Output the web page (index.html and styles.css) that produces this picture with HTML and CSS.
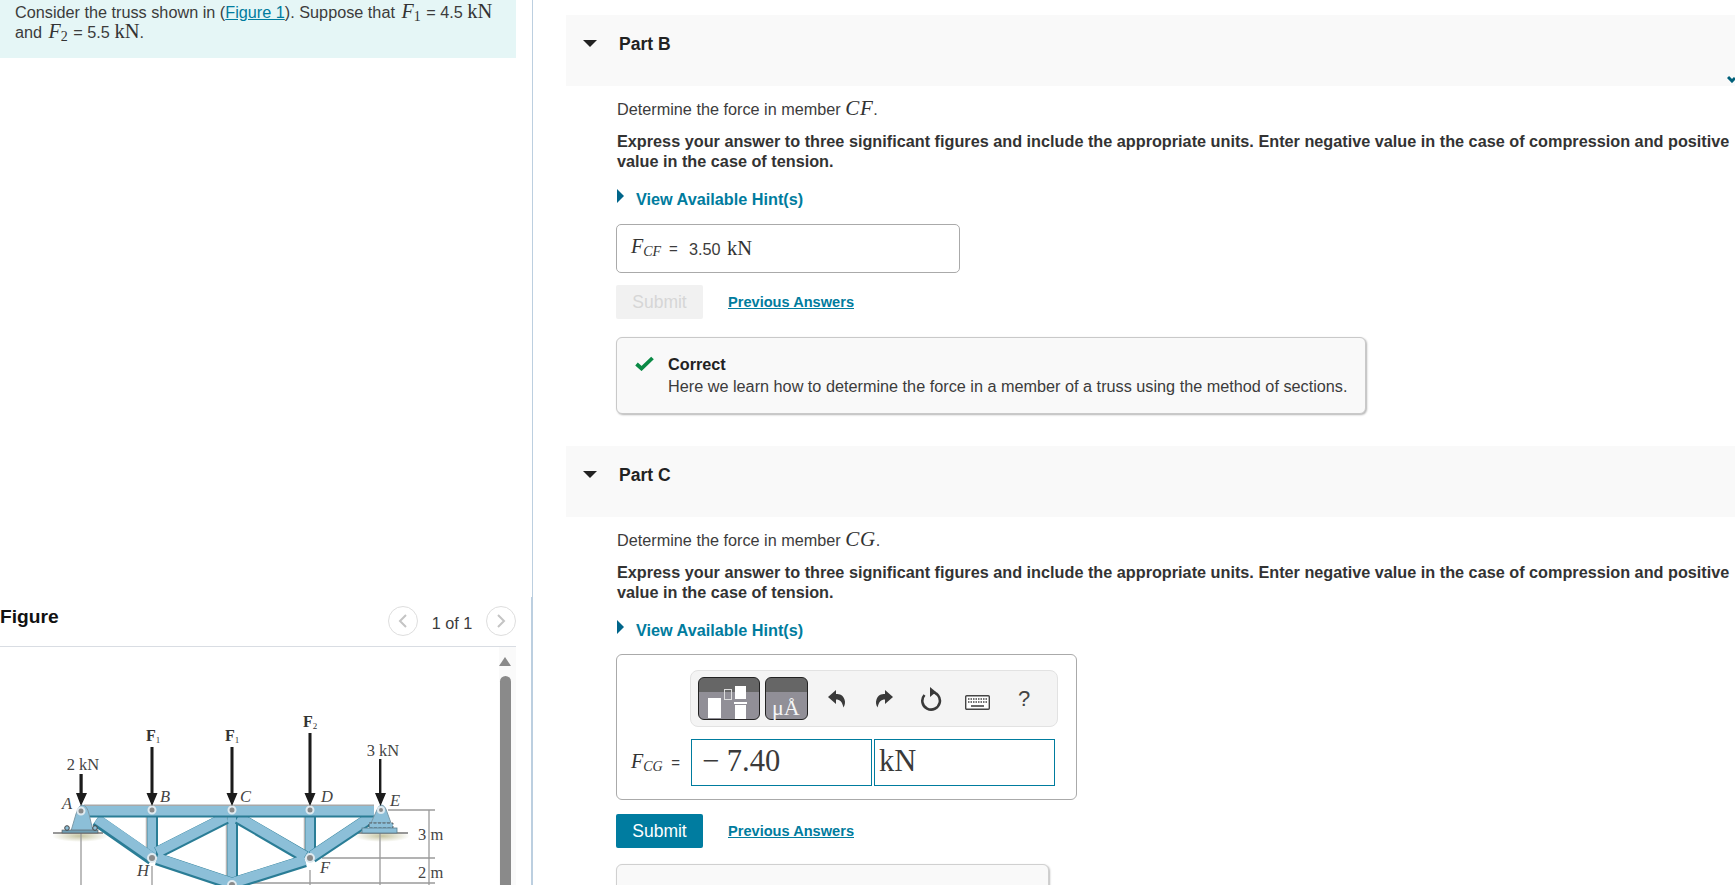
FILE: index.html
```html
<!DOCTYPE html>
<html lang="en">
<head>
<meta charset="utf-8">
<title>Truss problem</title>
<link rel="stylesheet" href="styles.css">
</head>
<body>
<div class="page">
  <aside class="left">
    <div class="intro">Consider the truss shown in (<a href="#">Figure 1</a>). Suppose that <i class="m">F<sub>1</sub></i> = 4.5 <span class="u">kN</span> and <i class="m">F<sub>2</sub></i> = 5.5 <span class="u">kN</span>.</div>
    <div class="fig-head">
      <h2>Figure</h2>
      <div class="pager">
        <span class="circle"><svg width="10" height="16" viewBox="0 0 10 16"><path d="M8 2 2 8l6 6" fill="none" stroke="#c4c4c4" stroke-width="2"/></svg></span>
        <span class="count">1 of 1</span>
        <span class="circle"><svg width="10" height="16" viewBox="0 0 10 16"><path d="M2 2l6 6-6 6" fill="none" stroke="#c4c4c4" stroke-width="2"/></svg></span>
      </div>
    </div>
    <div class="fig-body">
      <svg class="truss" width="499" height="238" viewBox="0 647 499 238">
        <defs>
          <radialGradient id="sh"><stop offset="0" stop-color="#c4c4a0"/><stop offset="1" stop-color="#fff"/></radialGradient>
          <filter id="soft"><feGaussianBlur stdDeviation="0.4"/></filter>
        </defs>
        <g filter="url(#soft)">
          <ellipse cx="80" cy="836" rx="28" ry="6" fill="url(#sh)"/>
          <ellipse cx="382" cy="836" rx="28" ry="6" fill="url(#sh)"/>
          <g stroke="#9a9a9a" stroke-width="1.3" fill="none">
            <path d="M81 833V885M152 866V885M380 833V885M310 870V885"/>
            <path d="M388 810H435M322 858H435M238 883H435M429 810V885"/>
          </g>
          <path d="M53 833H103M357 833H408" stroke="#777" stroke-width="1.500"/>

          <g fill="none" stroke="#2b7d96" stroke-width="12">
            <path d="M152 817V857M232 817V885M310 817V857"/>
          </g>
          <g fill="none" stroke="#b4b4b4" stroke-width="1.500">
            <path d="M146.500 817V852M226.500 817V885M304.500 817V852"/>
          </g>
          <g fill="none" stroke="#8cbfd8" stroke-width="8.500">
            <path d="M151.750 817V857M231.750 817V885M309.750 817V857"/>
          </g>
          <g fill="none" stroke="#2b7d96" stroke-width="12.500">
            <path d="M96 820 152 859M157 853 226 818M238 818 305 857M157 859 232 884M305 861 232 884M312 857 372 817"/>
          </g>
          <g fill="none" stroke="#8cbfd8" stroke-width="10">
            <path d="M97 819 153 858M157 852 226 817M238 817 305 856M157 858 232 883M305 860 232 883M312 856 372 816"/>
          </g>
          <rect x="84" y="805" width="290" height="12.500" fill="#2b7d96"/>
          <rect x="84" y="806" width="290" height="9.500" fill="#8cbfd8"/>
          <rect x="84" y="804.500" width="290" height="1.500" fill="#a8a8a8"/>

          <path d="M71 831 76 814Q79 805 82 805 87 805 89 814L93 831Z" fill="#8cbfd8" stroke="#7c9aa8"/>
          <rect x="62" y="830" width="36" height="3" fill="#6f9fb4" stroke="#555" stroke-width=".6"/>
          <g fill="#8cbfd8" stroke="#444"><circle cx="67" cy="828" r="2.300"/><circle cx="95" cy="828" r="2.300"/></g>

          <path d="M371 823 376 812Q379 805 381 805 385 805 387 812L391 823Z" fill="#8cbfd8" stroke="#7c9aa8"/>
          <rect x="369" y="823" width="24" height="5" fill="#8cbfd8" stroke="#444" stroke-width=".8" stroke-dasharray="3 1.500"/>
          <rect x="362" y="828" width="35" height="5" fill="#8cbfd8" stroke="#5a7d8c" stroke-width=".8"/>

          <g fill="#8a8a8a" stroke="#dfeaf0" stroke-width="2">
            <circle cx="81" cy="811" r="3.500"/><circle cx="152" cy="810" r="3.500"/><circle cx="232" cy="810" r="3.500"/><circle cx="310" cy="810" r="3.500"/><circle cx="381" cy="810" r="3"/>
            <circle cx="152" cy="858" r="4"/><circle cx="310" cy="858" r="4"/><circle cx="232" cy="885" r="4"/>
          </g>
          <g fill="#1a1a1a">
            <rect x="79.500" y="774" width="3.200" height="22"/>
            <rect x="150.500" y="747" width="3" height="48"/>
            <rect x="230.500" y="747" width="3" height="48"/>
            <rect x="308.500" y="733" width="3" height="62"/>
            <rect x="379" y="759" width="2.400" height="36"/>
            <path d="M76 793H87L81 806ZM146.500 793H157.500L152 806ZM226.500 793H237.500L232 806ZM304.500 793H315.500L310 806ZM375 793H386L380.500 806Z"/>
          </g>
        </g>
        <g class="lbl">
          <text x="83" y="770" text-anchor="middle">2 kN</text>
          <text x="383" y="756" text-anchor="middle">3 kN</text>
          <text x="146" y="741" class="b">F<tspan class="s" dy="2">1</tspan></text>
          <text x="225" y="741" class="b">F<tspan class="s" dy="2">1</tspan></text>
          <text x="303" y="727" class="b">F<tspan class="s" dy="2">2</tspan></text>
          <text x="62" y="809" class="it">A</text>
          <text x="160" y="802" class="it">B</text>
          <text x="240" y="802" class="it">C</text>
          <text x="321" y="802" class="it">D</text>
          <text x="390" y="806" class="it">E</text>
          <text x="137" y="876" class="it">H</text>
          <text x="320" y="873" class="it">F</text>
          <text x="418" y="840">3 m</text>
          <text x="418" y="878">2 m</text>
        </g>
      </svg>
      <div class="scroll"><span class="up"></span><span class="thumb"></span></div>
    </div>
  </aside>

  <main class="right">
    <span class="chev"><svg width="8" height="8" viewBox="0 0 8 8"><path d="M1 2l4 4 3-3" fill="none" stroke="#00607a" stroke-width="3"/></svg></span>

    <section class="part">
      <header class="part-head"><span class="tri-down"></span><h3>Part B</h3></header>
      <div class="part-body">
        <p class="q">Determine the force in member <i class="m big">CF</i>.</p>
        <p class="ins">Express your answer to three significant figures and include the appropriate units. Enter negative value in the case of compression and positive value in the case of tension.</p>
        <a class="hint" href="#"><span class="tri-right"></span>View Available Hint(s)</a>
        <div class="answer-static"><i class="m">F<sub class="v">CF</sub></i> <span class="eq">=</span> <span class="val">3.50 <span class="u gap">kN</span></span></div>
        <div class="actions"><button class="btn off">Submit</button><a class="prev" href="#">Previous Answers</a></div>
        <div class="correct">
          <svg class="check" width="19" height="15" viewBox="0 0 19 15"><path d="M1.500 8 6.500 12.500 17.500 2" fill="none" stroke="#0a8a45" stroke-width="3.800"/></svg>
          <div><strong>Correct</strong><br>Here we learn how to determine the force in a member of a truss using the method of sections.</div>
        </div>
      </div>
    </section>

    <section class="part second">
      <header class="part-head"><span class="tri-down"></span><h3>Part C</h3></header>
      <div class="part-body">
        <p class="q">Determine the force in member <i class="m big">CG</i>.</p>
        <p class="ins">Express your answer to three significant figures and include the appropriate units. Enter negative value in the case of compression and positive value in the case of tension.</p>
        <a class="hint" href="#"><span class="tri-right"></span>View Available Hint(s)</a>
        <div class="answer-edit">
          <div class="toolbar">
            <span class="tool wide">
              <span class="sq s1"></span><span class="sq s2"></span>
              <span class="frac"><span class="sq s3"></span><span class="bar"></span><span class="sq s4"></span></span>
            </span>
            <span class="tool narrow"><span class="mu">μÅ</span></span>
            <span class="ico i1"><svg width="20" height="22" viewBox="0 0 20 22"><path d="M9 2 1 9l8 7v-4.500c4 0 6 2 7.500 8 1.500-3 2-5 1-8C16 7 13 6 9 6Z" fill="#3a3a3a"/></svg></span>
            <span class="ico i2"><svg width="20" height="22" viewBox="0 0 20 22"><path d="M11 2l8 7-8 7v-4.500c-4 0-6 2-7.500 8-1.500-3-2-5-1-8C4 7 7 6 11 6Z" fill="#3a3a3a"/></svg></span>
            <span class="ico i3"><svg width="24" height="26" viewBox="0 0 24 26"><path d="M12 6a8.800 8.800 0 1 1-6.500 3" fill="none" stroke="#3a3a3a" stroke-width="2.600"/><path d="M11 1l6 5-6 5Z" fill="#3a3a3a"/></svg></span>
            <span class="ico i4"><svg width="25" height="15" viewBox="0 0 25 15"><rect x=".7" y=".7" width="23.600" height="13.600" rx="1" fill="#fff" stroke="#444" stroke-width="1.400"/><path d="M3 4h19M3 7h19" stroke="#444" stroke-width="1.600" stroke-dasharray="1.500 1"/><path d="M6 11h13" stroke="#444" stroke-width="1.600"/></svg></span>
            <span class="qm">?</span>
          </div>
          <div class="inputs">
            <span class="flabel"><i class="m">F<sub class="v">CG</sub></i> <span class="eq">=</span></span>
            <span class="field">− 7.40</span>
            <span class="field unit">kN</span>
          </div>
        </div>
        <div class="actions a2"><button class="btn">Submit</button><a class="prev" href="#">Previous Answers</a></div>
        <div class="feedback"></div>
      </div>
    </section>
  </main>
</div>
</body>
</html>
```

FILE: styles.css
```css
* { box-sizing: border-box; }
html, body { margin: 0; height: 885px; overflow: hidden; background: #fff; }
body { font: 16.240px/20px "Liberation Sans", Arial, sans-serif; color: #3c3c3c; }
a { color: #007c9e; }

.page { display: flex; width: 1735px; height: 885px; overflow: hidden; }

/* left column */
.left { flex: 0 0 533px; border-right: 1px solid #bccfe0; position: relative; }
.left::after { content: ""; position: absolute; left: 531px; top: 597px; bottom: 0; width: 1px; background: #bccfe0; }
.intro { width: 516px; height: 58px; padding: 2px 18px 0 15px; background: #e5f6f6; line-height: 20px; }
.intro .m { margin: 0 1px 0 2px; }
.m { font-family: "Liberation Serif", "Times New Roman", serif; font-style: italic; font-size: 20px; line-height: 0; color: #333; }
.m sub { font-size: 14px; line-height: 0; font-style: normal; vertical-align: -3px; }
.m sub.v { font-style: italic; }
.u { font-family: "Liberation Serif", "Times New Roman", serif; font-size: 20.500px; line-height: 0; color: #333; }
.u.gap { margin-left: 2px; }

.fig-head { width: 516px; height: 90px; margin-top: 499px; padding-top: 48px; border-bottom: 1px solid #d9dde3; display: flex; justify-content: space-between; align-items: flex-start; }
.fig-head h2 { margin: 0; font-size: 19.200px; line-height: 24px; color: #111; font-weight: 700; }
.pager { display: flex; align-items: center; margin-top: 1px; }
.circle { width: 30px; height: 30px; border: 1px solid #dedede; border-radius: 50%; display: flex; align-items: center; justify-content: center; }
.count { width: 68px; text-align: center; padding-top: 3px; }

.fig-body { display: flex; width: 516px; height: 238px; overflow: hidden; }
.truss { display: block; flex: none; }
.lbl text { font: 16.500px "Liberation Serif", serif; fill: #444; }
.lbl .b { font-size: 16px; font-weight: 700; fill: #333; }
.lbl .s { font-size: 9px; font-weight: 400; }
.lbl .it { font-style: italic; }
.scroll { width: 17px; display: flex; flex-direction: column; align-items: flex-start; background: #fafafa; }
.up { width: 0; height: 0; margin-top: 10px; border: 6.500px solid transparent; border-top: 0; border-bottom: 9px solid #8a8a8a; }
.thumb { width: 11px; flex: 1; margin: 10px 0 0 1px; background: #8a8a8a; border-radius: 6px 6px 0 0; }

/* right column */
.right { flex: 1; position: relative; padding: 15px 0 0 33px; overflow: hidden; }
.chev { position: absolute; left: 1194px; top: 75px; line-height: 0; }
.part.second { margin-top: 32px; }
.part-head { height: 71px; background: #f9f9f9; padding: 19px 0 0 17px; display: flex; }
.part-head h3 { margin: 0 0 0 22px; font-size: 17.500px; line-height: 20px; color: #222; font-weight: 700; }
.tri-down { width: 0; height: 0; margin-top: 6px; border: 7px solid transparent; border-bottom: 0; border-top: 7px solid #222; }
.part-body { padding: 13px 0 0 50px; }
.q { margin: 0 0 0 1px; }
.m.big { font-size: 21px; letter-spacing: .6px; }
.ins { margin: 12px 0 0 1px; font-weight: 700; color: #333; }
.hint { display: flex; margin: 18px 0 0 1px; font-weight: 700; text-decoration: none; }
.tri-right { width: 0; height: 0; margin: 0 12px 0 0; border: 7.500px solid transparent; border-right: 0; border-left: 7px solid #00658a; }

.answer-static { width: 344px; height: 49px; margin-top: 15px; padding: 0 0 0 14px; border: 1px solid #aaa; border-radius: 5px; display: flex; align-items: center; gap: 8px; }
.val { margin-left: 3px; }
.eq { font-size: 15px; }

.actions { display: flex; align-items: center; margin-top: 12px; }
.actions.a2 { margin-top: 14px; }
.a2 .prev { margin-top: -1px; }
.btn { width: 87px; height: 34px; border: 0; border-radius: 2px; background: #007ca0; color: #fff; font: 17.500px "Liberation Sans", Arial, sans-serif; padding: 0; }
.btn.off { background: #f1f1f1; color: #d6d6d6; }
.prev { margin-left: 25px; font-size: 14.600px; font-weight: 700; }

.correct { width: 750px; height: 77px; margin-top: 18px; padding: 15px 0 0 18px; background: #f9f9f9; border: 1px solid #c9c9c9; border-radius: 6px; box-shadow: 1px 1px 2px #b5b5b5; display: flex; gap: 14px; line-height: 22px; }
.correct strong { color: #222; }
.check { margin-top: 3px; }

.answer-edit { width: 461px; height: 146px; margin-top: 14px; padding: 15px 0 0 73px; border: 1px solid #aaa; border-radius: 6px; }
.toolbar { width: 368px; height: 57px; border: 1px solid #e2e2e2; border-radius: 8px; background: #f4f4f4; display: flex; align-items: center; position: relative; padding-left: 7px; }
.tool { height: 43px; border: 1px solid #222; border-radius: 6px; background: linear-gradient(#666 0 35%, #918f97 35%); display: block; position: relative; flex: none; }
.tool.wide { width: 62px; }
.tool.narrow { width: 43px; margin-left: 5px; }
.sq { position: absolute; background: #fff; }
.s1 { left: 9px; top: 20px; width: 13px; height: 20px; }
.s2 { left: 25px; top: 11px; width: 8px; height: 11px; background: transparent; border: 1px solid #ddd; }
.frac .s3 { left: 36px; top: 8px; width: 11px; height: 13px; }
.frac .bar { position: absolute; left: 35px; top: 24px; width: 13px; height: 2px; background: #fff; }
.frac .s4 { left: 36px; top: 27px; width: 11px; height: 14px; }
.mu { position: absolute; left: 6px; bottom: -1px; font: 22px/24px "Liberation Serif", serif; color: #f6f6f6; white-space: nowrap; }
.ico { position: absolute; line-height: 0; }
.i1 { left: 136px; top: 17px; }
.i2 { left: 183px; top: 17px; }
.i3 { left: 228px; top: 15px; }
.i4 { left: 274px; top: 24px; }
.qm { position: absolute; left: 327px; top: 18px; font-size: 22px; color: #444; }

.inputs { display: flex; align-items: stretch; height: 47px; margin: 12px 0 0 1px; position: relative; gap: 2px; }
.flabel { position: absolute; left: -60px; top: 13px; white-space: nowrap; }
.flabel .eq { margin-left: 4px; }
.field { width: 181px; border: 1px solid #007c9e; font: 30.500px/43px "Liberation Serif", serif; color: #3a3a3a; padding-left: 10px; background: #fff; }
.field.unit { padding-left: 4px; }

.feedback { width: 433px; height: 40px; margin-top: 16px; background: #f9f9f9; border: 1px solid #d0d0d0; border-radius: 6px; box-shadow: 1px 1px 2px #bbb; }
```
